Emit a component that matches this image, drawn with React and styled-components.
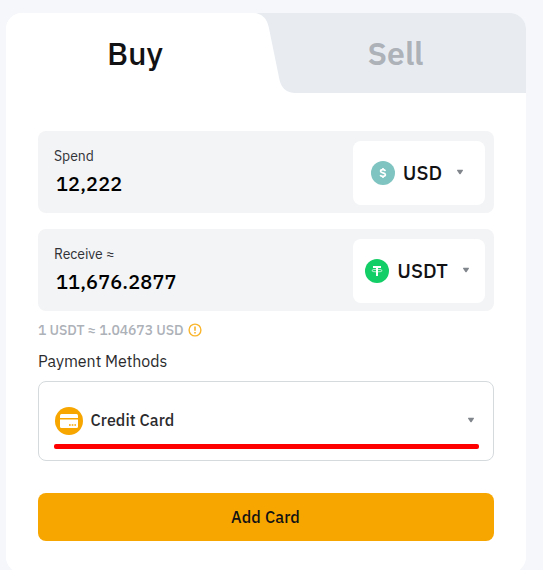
import React from 'react';
import styled, { createGlobalStyle } from 'styled-components';

const GlobalStyle = createGlobalStyle`
	* {
		box-sizing: border-box;
	}

	body {
		margin: 0;
		height: 570px;
		overflow: hidden;
		background: #f5f7fb;
		color: #121214;
		font-family: 'IBM Plex Sans', 'Noto Sans', sans-serif;
	}

	button {
		padding: 0;
		border: 0;
		background: none;
		color: inherit;
		font-family: inherit;
		cursor: pointer;
	}
`;

const Card = styled.main`
	width: 520px;
	height: 560px;
	margin: 13px 0 0 6px;
	border-radius: 16px;
	background: #fff;
	overflow: hidden;
`;

const Tabs = styled.nav`
	display: flex;
	height: 80px;

	svg {
		display: block;
		flex: none;
	}
`;

const Tab = styled.button`
	width: ${(p) => (p.$active ? '244px' : '224px')};
	padding: ${(p) => (p.$active ? '0 0 0 14px' : '0 37px 0 0')};
	background: ${(p) => (p.$active ? '#fff' : '#e8ecf1')};
	color: ${(p) => (p.$active ? '#121214' : '#adb1b8')};
	font-size: 32px;
	font-weight: ${(p) => (p.$active ? 500 : 600)};
	line-height: 80px;
`;

const Body = styled.section`
	padding: 38px 32px 0;
`;

const Field = styled.div`
	display: flex;
	justify-content: space-between;
	align-items: center;
	height: 82px;
	margin-bottom: ${(p) => (p.$last ? 0 : '16px')};
	padding: 2px 9px 0 16px;
	border-radius: 8px;
	background: #f3f4f6;
`;

const Label = styled.div`
	margin-top: 1px;
	font-size: 14px;
	line-height: 20px;
	letter-spacing: -0.05px;
	color: #303236;
`;

const Amount = styled.div`
	padding-left: 2px;
	font-size: 20px;
	font-weight: 500;
	line-height: 36px;
	letter-spacing: 0.1px;
	color: #000;
`;

const Currency = styled.button`
	display: flex;
	justify-content: center;
	align-items: center;
	width: 132px;
	height: 64px;
	padding-right: 3px;
	border-radius: 8px;
	background: #fff;
	font-size: 20px;
	font-weight: 500;

	span {
		margin: 0 14px 0 8px;
		padding-bottom: 2px;
	}
`;

const CaretIcon = styled.svg`
	display: block;
	flex: none;
	margin-bottom: 2px;
`;

const Rate = styled.div`
	display: flex;
	align-items: center;
	height: 20px;
	margin-top: 9px;
	color: #adb1b8;
	font-size: 14px;
	font-weight: 500;
	letter-spacing: -0.09px;

	svg {
		margin-left: 5px;
	}
`;

const Title = styled.h2`
	margin: 10px 0 9px;
	font-size: 16px;
	font-weight: 400;
	line-height: 22px;
	letter-spacing: -0.03px;
	color: #2b2b2d;
`;

const Method = styled.div`
	height: 80px;
	padding: 25px 14px 0 15px;
	border: 1px solid #d5dadd;
	border-radius: 8px;
`;

const MethodRow = styled.div`
	display: flex;
	align-items: center;
	height: 28px;
	padding: 0 4px 0 1px;
	font-size: 16px;
	font-weight: 500;
	letter-spacing: 0.1px;
	color: #2b2b2d;

	span {
		flex: 1;
		margin-left: 7.5px;
		padding-bottom: 2px;
	}
`;

const Underline = styled.div`
	height: 5px;
	margin-top: 9px;
	border-radius: 2px;
	background: #ff0000;
`;

const AddButton = styled.button`
	display: block;
	width: 100%;
	height: 48px;
	margin-top: 32px;
	padding-right: 1px;
	border-radius: 8px;
	background: #f7a600;
	font-size: 16px;
	font-weight: 500;
	line-height: 48px;
	letter-spacing: 0.15px;
`;

function TabEdge() {
	return (
		<svg width="52" height="80" viewBox="0 0 52 80">
			<path d="M52 0V80H45C37 80 31 75 29.3 66L18.7 14C17 5 11 0 3 0Z" fill="#e8ecf1" />
		</svg>
	);
}

function Caret() {
	return (
		<CaretIcon width="8" height="6" viewBox="0 0 8 6">
			<path d="M1.6 0.7H6.4Q7.6 0.7 6.8 1.8L4.8 4.8Q4 5.8 3.2 4.8L1.2 1.8Q0.4 0.7 1.6 0.7Z" fill="#81858c" />
		</CaretIcon>
	);
}

function DollarIcon() {
	return (
		<svg width="24" height="24" viewBox="0 0 24 24" fill="none">
			<circle cx="12" cy="12" r="12" fill="#7fc4c0" />
			<path
				d="M14.3 10.1C14.1 9.1 13.1 8.7 11.9 8.7C10.5 8.7 9.6 9.2 9.6 10.2C9.6 12.5 14.4 11.2 14.4 13.7C14.4 14.8 13.3 15.3 11.9 15.3C10.5 15.3 9.5 14.8 9.3 13.8M12 7V8.8M12 15.2V17"
				stroke="#fff"
				strokeWidth="1.7"
			/>
		</svg>
	);
}

function TetherIcon() {
	return (
		<svg width="24" height="24" viewBox="0 0 24 24" fill="none">
			<circle cx="12" cy="12" r="12" fill="#13ce66" />
			<path d="M8 7H16V9H13V17H11V9H8Z" fill="#fff" />
			<ellipse cx="12" cy="11.6" rx="5.2" ry="1.3" stroke="#fff" strokeWidth="0.7" />
		</svg>
	);
}

function InfoIcon() {
	return (
		<svg width="14" height="14" viewBox="0 0 14 14" fill="none" stroke="#f9b52c">
			<circle cx="7" cy="7" r="5.9" strokeWidth="1.4" />
			<path d="M7 3.6V7.8M7 9.1V10.4" strokeWidth="1.6" />
		</svg>
	);
}

function CardIcon() {
	return (
		<svg width="28" height="28" viewBox="0 0 28 28">
			<circle cx="14" cy="14" r="14" fill="#f7a600" />
			<path d="M6.5 7H21.5Q23 7 23 8.5V11H5V8.5Q5 7 6.5 7Z" fill="#fff" />
			<path d="M5 12.5H23V19.5Q23 21 21.5 21H6.5Q5 21 5 19.5Z" fill="#fff" />
			<path d="M14 18H15.7M16.7 18H18.4M19.4 18H21" stroke="#f7a600" strokeWidth="1.3" />
		</svg>
	);
}

export default function App() {
	return (
		<>
			<GlobalStyle />
			<Card>
				<Tabs>
					<Tab $active>Buy</Tab>
					<TabEdge />
					<Tab>Sell</Tab>
				</Tabs>
				<Body>
					<Field>
						<div>
							<Label>Spend</Label>
							<Amount>12,222</Amount>
						</div>
						<Currency>
							<DollarIcon />
							<span>USD</span>
							<Caret />
						</Currency>
					</Field>
					<Field $last>
						<div>
							<Label>Receive ≈</Label>
							<Amount>11,676.2877</Amount>
						</div>
						<Currency>
							<TetherIcon />
							<span>USDT</span>
							<Caret />
						</Currency>
					</Field>
					<Rate>
						1 USDT ≈ 1.04673 USD
						<InfoIcon />
					</Rate>
					<Title>Payment Methods</Title>
					<Method>
						<MethodRow>
							<CardIcon />
							<span>Credit Card</span>
							<Caret />
						</MethodRow>
						<Underline />
					</Method>
					<AddButton>Add Card</AddButton>
				</Body>
			</Card>
		</>
	);
}
